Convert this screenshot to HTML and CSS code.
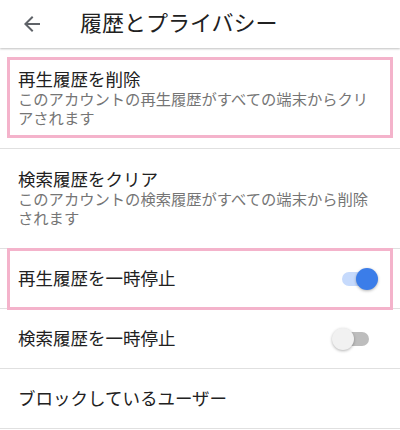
FILE: index.html
```html
<!DOCTYPE html>
<html lang="ja">
<head>
    <meta charset="UTF-8">
    <meta name="viewport" content="width=device-width, initial-scale=1.0">
    <title>履歴とプライバシー</title>
    <link rel="stylesheet" href="styles.css">
</head>
<body>
    <header class="app-bar">
        <button class="back-btn" aria-label="戻る">
            <svg width="24" height="24" viewBox="0 0 24 24">
                <path d="M20 11H7.83l5.59-5.59L12 4l-8 8 8 8 1.41-1.41L7.83 13H20v-2z" fill="#5f6368"/>
            </svg>
        </button>
        <h1 class="app-title">履歴とプライバシー</h1>
    </header>

    <main class="settings">
        <div class="item two-line">
            <div class="item-title">再生履歴を削除</div>
            <div class="item-sub">このアカウントの再生履歴がすべての端末からクリアされます</div>
        </div>
        <div class="item two-line">
            <div class="item-title">検索履歴をクリア</div>
            <div class="item-sub">このアカウントの検索履歴がすべての端末から削除されます</div>
        </div>
        <div class="item one-line">
            <div class="item-title">再生履歴を一時停止</div>
            <span class="switch on"><span class="thumb"></span></span>
        </div>
        <div class="item one-line">
            <div class="item-title">検索履歴を一時停止</div>
            <span class="switch off"><span class="thumb"></span></span>
        </div>
        <div class="item one-line">
            <div class="item-title">ブロックしているユーザー</div>
        </div>

        <!-- highlight marks -->
        <div class="mark mark-delete"></div>
        <div class="mark mark-pause"></div>
    </main>
</body>
</html>
```

FILE: styles.css
```css
body {
    margin: 0;
    font-family: Roboto, "Noto Sans CJK JP", sans-serif;
    background: #fff;
    color: #212121;
}

.app-bar {
    height: 48px;
    display: flex;
    align-items: center;
    background: #fff;
    box-shadow: 0 1px 2px rgba(0, 0, 0, 0.25);
    position: relative;
    z-index: 1;
}

.back-btn {
    border: none;
    background: none;
    padding: 0;
    margin-left: 20px;
    width: 24px;
    height: 24px;
    display: flex;
}

.app-title {
    margin: 0 0 0 36px;
    font-size: 22px;
    font-weight: 400;
    color: #212121;
    line-height: 28px;
}

.settings {
    position: relative;
    padding-top: 1px;
}

.item {
    display: flex;
    align-items: center;
    padding: 0 24px 0 18px;
    border-bottom: 1px solid #e0e0e0;
}

.two-line {
    flex-direction: column;
    align-items: flex-start;
    padding-top: 20px;
    padding-bottom: 19px;
}

.one-line {
    height: 59px;
    justify-content: space-between;
}

.item-title {
    font-size: 17.5px;
    line-height: 22px;
}

.item-sub {
    font-size: 15.3px;
    line-height: 19px;
    color: #757575;
}

.switch {
    position: relative;
    width: 34px;
    height: 14px;
    border-radius: 7px;
    background: #bdbdbd;
}

.switch .thumb {
    position: absolute;
    top: -4px;
    width: 22px;
    height: 22px;
    border-radius: 50%;
    box-shadow: 0 1px 3px rgba(0, 0, 0, 0.3);
}

.switch.on {
    background: #c6dafc;
}

.switch.on .thumb {
    right: -2px;
    background: #3b7de9;
}

.switch.off {
    margin-right: 7px;
}

.switch.off .thumb {
    left: -3px;
    background: #f1f1f1;
}

.mark {
    position: absolute;
    left: 7px;
    right: 7px;
    border: 3px solid #f4b3cb;
    pointer-events: none;
}

.mark-delete {
    top: 9px;
    height: 75px;
}

.mark-pause {
    top: 200px;
    height: 56px;
}
```
